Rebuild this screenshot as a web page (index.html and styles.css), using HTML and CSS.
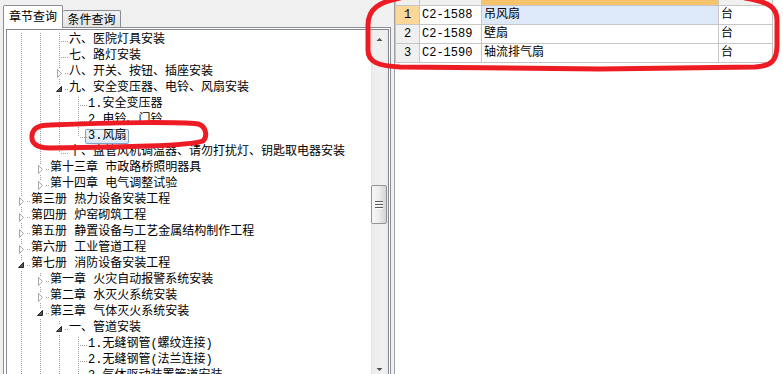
FILE: index.html
```html
<!DOCTYPE html>
<html lang="zh-CN">
<head>
    <meta charset="UTF-8">
    <title>定额查询</title>
    <link rel="stylesheet" href="styles.css">
</head>
<body>
    <svg class="defs" width="0" height="0">
        <symbol id="tri-c" viewBox="0 0 19 16"><rect x="6" y="3" width="9" height="10" fill="#fff"/><path d="M8.5 4.5 12.5 8.5 8.5 12.5Z" fill="#fff" stroke="#a6a6a6"/></symbol>
        <symbol id="tri-e" viewBox="0 0 19 16"><rect x="6" y="3" width="9" height="10" fill="#fff"/><path d="M12.5 5.5V10.5H7.5Z" fill="#595959" stroke="#262626" stroke-linejoin="round"/></symbol>
    </svg>

    <div class="left-pane">
        <div class="tabs">
            <div class="tab active">章节查询</div>
            <div class="tab">条件查询</div>
        </div>
        <div class="tab-page">
            <div class="tree">
                <div class="tree-rows">
                    <div class="row"><i class="g v"></i><i class="g v"></i><i class="g t"></i><span class="lbl">六、医院灯具安装</span></div>
                    <div class="row"><i class="g v"></i><i class="g v"></i><i class="g t"></i><span class="lbl">七、路灯安装</span></div>
                    <div class="row"><i class="g v"></i><i class="g v"></i><i class="g t"><svg class="exp"><use href="#tri-c"/></svg></i><span class="lbl">八、开关、按钮、插座安装</span></div>
                    <div class="row"><i class="g v"></i><i class="g v"></i><i class="g t"><svg class="exp"><use href="#tri-e"/></svg></i><span class="lbl">九、安全变压器、电铃、风扇安装</span></div>
                    <div class="row"><i class="g v"></i><i class="g v"></i><i class="g v"></i><i class="g t"></i><span class="lbl">1.安全变压器</span></div>
                    <div class="row"><i class="g v"></i><i class="g v"></i><i class="g v"></i><i class="g t"></i><span class="lbl">2.电铃、门铃</span></div>
                    <div class="row"><i class="g v"></i><i class="g v"></i><i class="g v"></i><i class="g l"></i><span class="lbl sel">3.风扇</span></div>
                    <div class="row"><i class="g v"></i><i class="g v"></i><i class="g l"></i><span class="lbl">十、盘管风机调温器、请勿打扰灯、钥匙取电器安装</span></div>
                    <div class="row"><i class="g v"></i><i class="g t"><svg class="exp"><use href="#tri-c"/></svg></i><span class="lbl">第十三章 市政路桥照明器具</span></div>
                    <div class="row"><i class="g v"></i><i class="g l"><svg class="exp"><use href="#tri-c"/></svg></i><span class="lbl">第十四章 电气调整试验</span></div>
                    <div class="row"><i class="g t"><svg class="exp"><use href="#tri-c"/></svg></i><span class="lbl">第三册 热力设备安装工程</span></div>
                    <div class="row"><i class="g t"><svg class="exp"><use href="#tri-c"/></svg></i><span class="lbl">第四册 炉窑砌筑工程</span></div>
                    <div class="row"><i class="g t"><svg class="exp"><use href="#tri-c"/></svg></i><span class="lbl">第五册 静置设备与工艺金属结构制作工程</span></div>
                    <div class="row"><i class="g t"><svg class="exp"><use href="#tri-c"/></svg></i><span class="lbl">第六册 工业管道工程</span></div>
                    <div class="row"><i class="g t"><svg class="exp"><use href="#tri-e"/></svg></i><span class="lbl">第七册 消防设备安装工程</span></div>
                    <div class="row"><i class="g v"></i><i class="g t"><svg class="exp"><use href="#tri-c"/></svg></i><span class="lbl">第一章 火灾自动报警系统安装</span></div>
                    <div class="row"><i class="g v"></i><i class="g t"><svg class="exp"><use href="#tri-c"/></svg></i><span class="lbl">第二章 水灭火系统安装</span></div>
                    <div class="row"><i class="g v"></i><i class="g t"><svg class="exp"><use href="#tri-e"/></svg></i><span class="lbl">第三章 气体灭火系统安装</span></div>
                    <div class="row"><i class="g v"></i><i class="g v"></i><i class="g t"><svg class="exp"><use href="#tri-e"/></svg></i><span class="lbl">一、管道安装</span></div>
                    <div class="row"><i class="g v"></i><i class="g v"></i><i class="g v"></i><i class="g t"></i><span class="lbl">1.无缝钢管(螺纹连接)</span></div>
                    <div class="row"><i class="g v"></i><i class="g v"></i><i class="g v"></i><i class="g t"></i><span class="lbl">2.无缝钢管(法兰连接)</span></div>
                    <div class="row"><i class="g v"></i><i class="g v"></i><i class="g v"></i><i class="g t"></i><span class="lbl">3.气体驱动装置管道安装</span></div>
                </div>
                <div class="vscroll">
                    <div class="sb-btn"><svg width="17" height="17"><path class="arrow" d="M5.5 11H11.5L8.5 8Z"/></svg></div>
                    <div class="sb-track">
                        <div class="sb-thumb">
                            <svg class="grip" width="8" height="8">
                                <rect x="0" y="0" width="8" height="1" fill="#5a5a5a"/>
                                <rect x="0" y="1" width="8" height="1" fill="#fff"/>
                                <rect x="0" y="3" width="8" height="1" fill="#5a5a5a"/>
                                <rect x="0" y="4" width="8" height="1" fill="#fff"/>
                                <rect x="0" y="6" width="8" height="1" fill="#5a5a5a"/>
                                <rect x="0" y="7" width="8" height="1" fill="#fff"/>
                            </svg>
                        </div>
                    </div>
                    <div class="sb-btn"><svg width="17" height="17"><path class="arrow" d="M5.5 7H11.5L8.5 10Z"/></svg></div>
                </div>
            </div>
        </div>
    </div>

    <div class="grid-pane">
        <div class="grid-row head">
            <div class="cell rn"></div><div class="cell code"></div><div class="cell name"></div><div class="cell unit"></div>
        </div>
        <div class="grid-row cur">
            <div class="cell rn">1</div><div class="cell code">C2-1588</div><div class="cell name">吊风扇</div><div class="cell unit">台</div>
        </div>
        <div class="grid-row">
            <div class="cell rn">2</div><div class="cell code">C2-1589</div><div class="cell name">壁扇</div><div class="cell unit">台</div>
        </div>
        <div class="grid-row">
            <div class="cell rn">3</div><div class="cell code">C2-1590</div><div class="cell name">轴流排气扇</div><div class="cell unit">台</div>
        </div>
    </div>

    <!-- hand-drawn red marks over the screenshot -->
    <svg class="marks" width="783" height="374">
        <path d="M50 125C120 122 180 122 198 124C206 126 208 136 203 141C190 146 120 147 50 148C36 148 31 143 32 135C33 127 40 125 50 125Z"/>
        <path d="M400 -2C380 2 368 8 368 25L368 50C368 62 378 66 400 67L600 69L755 67C772 66 777 60 777 45L777 20C777 8 770 2 745 -2"/>
    </svg>
</body>
</html>
```

FILE: styles.css
```css
html, body {
    margin: 0;
    height: 100%;
}

body {
    position: relative;
    display: flex;
    overflow: hidden;
    background: #f0f0f0;
    font: 12px "Liberation Mono", "Noto Sans CJK SC", monospace;
    color: #000;
}

.defs {
    position: absolute;
    width: 0;
    height: 0;
}

/* left side: tabs + tree */
.left-pane {
    flex: none;
    width: 391px;
    height: 381px;
}

.tabs {
    display: flex;
    align-items: flex-end;
    height: 27px;
    padding-left: 3px;
    font-family: "Noto Sans CJK SC", sans-serif;
}

.tab {
    box-sizing: border-box;
    width: 58px;
    height: 17px;
    padding-top: 1px;
    line-height: 13px;
    text-align: center;
    border: 1px solid #898c95;
    border-bottom: none;
    border-left: none;
    border-radius: 2px 2px 0 0;
    background: linear-gradient(#f2f2f2, #e3e3e3);
}

.tab.active {
    position: relative;
    z-index: 1;
    width: 60px;
    height: 23px;
    margin-bottom: -1px;
    padding-top: 3px;
    line-height: 14px;
    border-left: 1px solid #898c95;
    background: #fff;
}

.tab-page {
    margin-left: 3px;
    width: 388px;
    box-sizing: border-box;
    padding: 1px 1px 1px 2px;
    border: 1px solid #898c95;
    background: #fff;
}

.tree {
    display: flex;
    height: 348px;
    border: 1px solid #828790;
    background: #fff;
}

.tree-rows {
    flex: 1;
    overflow: hidden;
    padding: 3px 0 0 4px;
}

.row {
    display: flex;
    align-items: flex-start;
    height: 16px;
    line-height: 16px;
    white-space: nowrap;
}

.g {
    position: relative;
    flex: none;
    width: 19px;
    height: 16px;
}

.g::before,
.g::after {
    content: "";
    position: absolute;
}

.v::before,
.t::before,
.l::before {
    left: 10px;
    top: 0;
    bottom: 0;
    width: 1px;
    background: linear-gradient(#a0a0a0 50%, transparent 0) 0 0 / 1px 2px;
}

.l::before {
    bottom: 8px;
}

.t::after,
.l::after {
    left: 11px;
    right: 0;
    top: 8px;
    height: 1px;
    background: linear-gradient(to right, transparent 50%, #a0a0a0 0) 0 0 / 2px 1px;
}

.exp {
    position: absolute;
    z-index: 1;
    left: 0;
    top: 0;
    width: 19px;
    height: 16px;
}

.lbl {
    margin-left: -2px;
    padding: 0 2px;
    height: 13px;
    line-height: 13px;
    border: 1px solid transparent;
}

.lbl.sel {
    border-color: #7da2ce;
    border-radius: 2px;
    background: linear-gradient(#eef5fd, #d9e8fb);
}

/* scrollbar */
.vscroll {
    display: flex;
    flex-direction: column;
    width: 17px;
    background: linear-gradient(to right, #e3e3e3, #eeeeee 2px, #f0f0f0 14px, #e8e8e8);
}

.sb-btn {
    height: 17px;
}

.sb-btn svg {
    display: block;
}

.arrow {
    fill: #505050;
}

.sb-track {
    flex: 1;
}

.sb-thumb {
    display: flex;
    align-items: center;
    justify-content: center;
    box-sizing: border-box;
    width: 16px;
    height: 39px;
    margin-top: 138px;
    border: 1px solid #949494;
    border-radius: 2px;
    background: linear-gradient(to right, #f7f7f7, #ececec 50%, #d4d4d4);
}

.grip {
    display: block;
}

/* right side: result grid */
.grid-pane {
    flex: 1;
    margin-left: 3px;
    border-left: 1px solid #a0a0a0;
    background: #fff;
}

.grid-row {
    display: flex;
    height: 19px;
}

.grid-row.head {
    height: 6px;
}

.cell {
    box-sizing: border-box;
    padding-left: 2px;
    line-height: 18px;
    white-space: nowrap;
    overflow: hidden;
    border-right: 1px solid #c6c6c6;
    border-bottom: 1px solid #c6c6c6;
}

.rn {
    width: 25px;
    padding: 0;
    text-align: center;
    border-left: 1px solid #c6c6c6;
    background: #f0f0f0;
}

.code {
    width: 62px;
}

.name {
    width: 237px;
}

.unit {
    width: 54px;
}

.head .cell {
    background: #f0f0f0;
}

.head .name {
    background: #f7c46c;
}

.cur .rn {
    background: #fdd797;
}

.cur .name {
    background: #dde9f8;
}

/* red annotation strokes */
.marks {
    position: absolute;
    left: 0;
    top: 0;
    pointer-events: none;
    fill: none;
    stroke: #ed1c24;
    stroke-width: 5;
    stroke-linecap: round;
    stroke-linejoin: round;
}
```
